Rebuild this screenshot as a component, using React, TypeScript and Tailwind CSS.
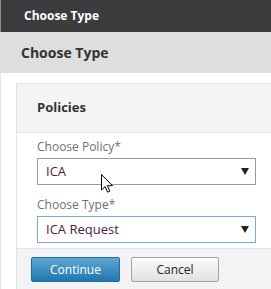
import React from 'react';

const font = { fontFamily: '"Open Sans", "Noto Sans", sans-serif' };

function Caret() {
  return (
    <svg width="8" height="7" viewBox="0 0 8 7" className="shrink-0">
      <path d="M0 0h8L4 7z" fill="#222" />
    </svg>
  );
}

function FakeSelect({ value, focused }: { value: string; focused?: boolean }) {
  return (
    <div
      className={`flex h-[27px] w-[219px] items-center justify-between border bg-white pl-[8px] pr-[6px] text-[13px] text-[#4a2046] ${
        focused ? 'border-[#7ba6e3]' : 'border-[#9a9a9a]'
      }`}
    >
      <span>{value}</span>
      <Caret />
    </div>
  );
}

export default function App() {
  return (
    <div className="relative h-[289px] w-[271px] overflow-hidden bg-white" style={font}>
      {/* top bar */}
      <div className="flex h-[32px] items-center border-l border-[#8c8c8c] bg-[#3b3c3e] pl-[23px] text-[12px] font-bold text-white">
        Choose Type
      </div>

      {/* page title */}
      <div className="flex h-[41px] items-center bg-[#dedede] pl-[21px] text-[14px] font-bold text-[#333]">
        Choose Type
      </div>

      {/* content */}
      <div className="border-l border-[#e4e4e4] pl-[15px] pt-[10px]">
        <div className="border-l border-t border-[#e2e2e2]">
          <div className="flex h-[49px] items-center border-b border-[#e6e6e6] bg-[#f4f4f4] pl-[20px] text-[13px] font-bold text-[#333]">
            Policies
          </div>

          <div className="bg-white pb-[5px] pl-[20px] pt-[6px]">
            <div className="mb-[3px] text-[12px] leading-[16px] text-[#707070]">Choose Policy*</div>
            <FakeSelect value="ICA" />
            <div className="mb-[3px] mt-[12px] text-[12px] leading-[16px] text-[#707070]">Choose Type*</div>
            <FakeSelect value="ICA Request" focused />
          </div>

          <div className="flex h-[42px] gap-[11px] border-t border-[#e2e2e2] bg-[#f3f3f3] pl-[14px] pt-[8px]">
            <button className="h-[25px] w-[89px] rounded-[2px] border border-[#1b6ca3] bg-gradient-to-b from-[#5ea7d3] to-[#1f77ad] text-[12px] text-white">
              Continue
            </button>
            <button className="h-[25px] w-[88px] rounded-[2px] border border-[#a3a3a3] bg-gradient-to-b from-[#fbfbfb] to-[#e1e1e1] text-[12px] text-[#222]">
              Cancel
            </button>
          </div>
        </div>
      </div>

      {/* mouse cursor */}
      <svg className="absolute left-[101px] top-[174px]" width="12" height="20" viewBox="0 0 12 20">
        <path
          d="M0.5 0.5v15.5l3.6-3.4 2.5 5.6 2.3-1-2.5-5.5h5.1z"
          fill="#fff"
          stroke="#000"
          strokeWidth="1"
          strokeLinejoin="round"
        />
      </svg>
    </div>
  );
}
